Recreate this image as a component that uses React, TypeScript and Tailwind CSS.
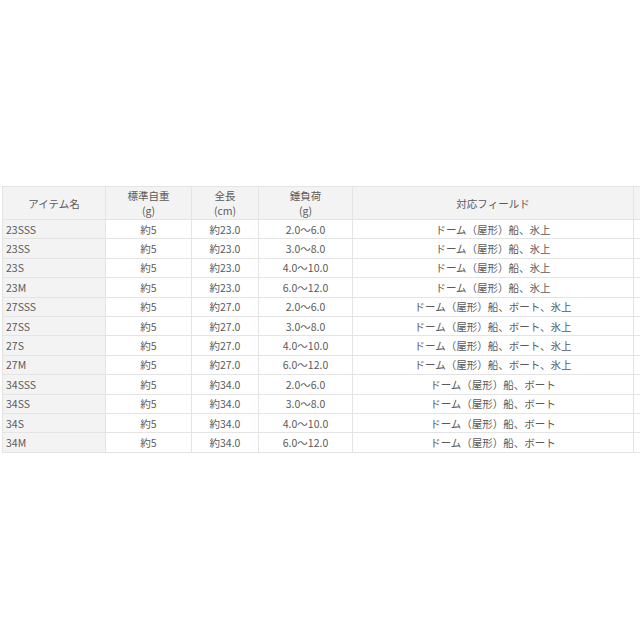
import React from 'react';

type Row = [string, string, string, string, string];

const ROWS: Row[] = [
  ['23SSS', '約5', '約23.0', '2.0〜6.0', 'ドーム（屋形）船、氷上'],
  ['23SS', '約5', '約23.0', '3.0〜8.0', 'ドーム（屋形）船、氷上'],
  ['23S', '約5', '約23.0', '4.0〜10.0', 'ドーム（屋形）船、氷上'],
  ['23M', '約5', '約23.0', '6.0〜12.0', 'ドーム（屋形）船、氷上'],
  ['27SSS', '約5', '約27.0', '2.0〜6.0', 'ドーム（屋形）船、ボート、氷上'],
  ['27SS', '約5', '約27.0', '3.0〜8.0', 'ドーム（屋形）船、ボート、氷上'],
  ['27S', '約5', '約27.0', '4.0〜10.0', 'ドーム（屋形）船、ボート、氷上'],
  ['27M', '約5', '約27.0', '6.0〜12.0', 'ドーム（屋形）船、ボート、氷上'],
  ['34SSS', '約5', '約34.0', '2.0〜6.0', 'ドーム（屋形）船、ボート'],
  ['34SS', '約5', '約34.0', '3.0〜8.0', 'ドーム（屋形）船、ボート'],
  ['34S', '約5', '約34.0', '4.0〜10.0', 'ドーム（屋形）船、ボート'],
  ['34M', '約5', '約34.0', '6.0〜12.0', 'ドーム（屋形）船、ボート'],
];

const th = 'border border-[#e4e4e4] bg-[#f3f3f3] font-normal text-center align-middle leading-[15px] p-0';
const td = 'border border-[#e4e4e4] h-[19.4px] p-0 text-center align-middle leading-[15px]';

export default function App() {
  return (
    <div className="w-[640px] h-[640px] bg-white overflow-hidden">
      <div className="pt-[186px] pl-[2px]">
        <table
          className="border-collapse table-fixed w-[660px] text-[10.5px] text-[#5a5a5a]"
          style={{ fontFamily: '"Noto Sans CJK JP", "Noto Sans", sans-serif' }}
        >
          <colgroup>
            <col className="w-[103px]" />
            <col className="w-[86px]" />
            <col className="w-[67px]" />
            <col className="w-[94px]" />
            <col className="w-[281px]" />
            <col className="w-[29px]" />
          </colgroup>
          <thead>
            <tr className="h-[33px]">
              <th className={th}>アイテム名</th>
              <th className={th}>標準自重<br />(g)</th>
              <th className={th}>全長<br />(cm)</th>
              <th className={th}>錘負荷<br />(g)</th>
              <th className={th}>対応フィールド</th>
              <th className={th}></th>
            </tr>
          </thead>
          <tbody>
            {ROWS.map((r) => (
              <tr key={r[0]}>
                <td className={td + ' bg-[#f3f3f3] text-left pl-[3px]'}>{r[0]}</td>
                <td className={td}>{r[1]}</td>
                <td className={td}>{r[2]}</td>
                <td className={td}>{r[3]}</td>
                <td className={td}>{r[4]}</td>
                <td className={td}></td>
              </tr>
            ))}
          </tbody>
        </table>
      </div>
    </div>
  );
}
